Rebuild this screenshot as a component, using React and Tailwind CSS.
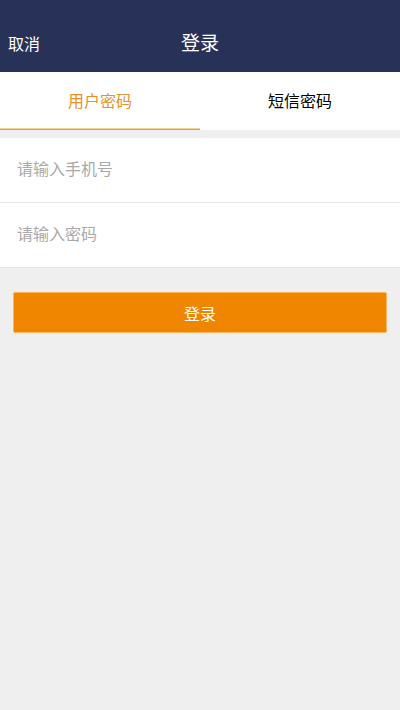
import React, { useState } from 'react';

const font = { fontFamily: '"Noto Sans CJK SC", "Noto Sans", sans-serif' };

export default function App() {
  const [tab, setTab] = useState(0);
  const tabs = ['用户密码', '短信密码'];

  return (
    <div className="w-[400px] h-[710px] bg-[#efefef] flex flex-col" style={font}>
      {/* header */}
      <div className="h-[72px] bg-[#283157] flex items-end pb-[18px] px-[8px] relative">
        <span className="text-white text-[16px] leading-[22px]">取消</span>
        <span className="absolute left-0 right-0 bottom-[17px] text-center text-white text-[19px] leading-[26px]">登录</span>
      </div>

      {/* tabs */}
      <div className="h-[58px] bg-white flex">
        {tabs.map((t, i) => (
          <button
            key={t}
            onClick={() => setTab(i)}
            className="flex-1 flex flex-col"
          >
            <span
              className={
                'flex-1 flex items-center justify-center text-[16px] ' +
                (tab === i ? 'text-[#e8912a]' : 'text-black')
              }
            >
              {t}
            </span>
            {tab === i ? (
              <span className="w-full flex flex-col">
                <span className="h-[1px] bg-[#f4d49c]" />
                <span className="h-[1px] bg-[#e99b3c]" />
              </span>
            ) : (
              <span className="h-[2px]" />
            )}
          </button>
        ))}
      </div>

      {/* inputs */}
      <div className="mt-[8px] bg-white border-b border-[#e3e3e3]">
        <div className="h-[65px] flex items-center pb-[4px] px-[17px] border-b border-[#e8e8e8]">
          <input
            placeholder="请输入手机号"
            className="w-full outline-none text-[16px] placeholder:text-[#a9a9a9]"
            style={font}
          />
        </div>
        <div className="h-[64px] flex items-center pb-[4px] px-[17px]">
          <input
            type="password"
            placeholder="请输入密码"
            className="w-full outline-none text-[16px] placeholder:text-[#a9a9a9]"
            style={font}
          />
        </div>
      </div>

      <div className="px-[13px] mt-[24px]">
        <button className="w-full h-[41px] bg-[#f08500] border border-[#f7b55a] rounded-[2px] text-white text-[16px]">
          登录
        </button>
      </div>
    </div>
  );
}
